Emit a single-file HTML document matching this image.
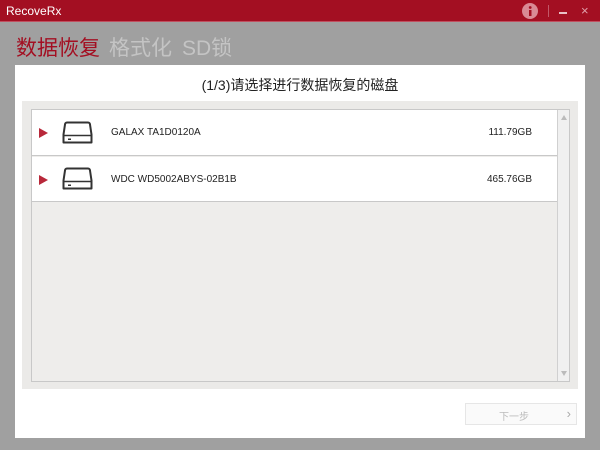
<!DOCTYPE html>
<html><head><meta charset="utf-8"><style>
*{margin:0;padding:0;box-sizing:border-box}
body{width:600px;height:450px;background:#a0a0a0;position:relative;overflow:hidden;font-family:"Liberation Sans","Noto Sans CJK SC",sans-serif}
.tb{position:absolute;left:0;top:0;width:600px;height:22px;background:#a30f22;border-bottom:1px solid #c05060}
.tb .t{position:absolute;left:6px;top:4px;color:#fff;font-size:12px}
.tabs{position:absolute;top:32px;font-size:21px;font-family:"Liberation Sans","Noto Sans CJK SC",sans-serif;white-space:nowrap}
.panel{position:absolute;left:15px;top:65px;width:570px;height:373px;background:#fff}
.h{position:absolute;left:0;width:570px;top:10px;text-align:center;font-size:14px;color:#222}
.area{position:absolute;left:7px;top:36px;width:556px;height:288px;background:#ebeae8}
.list{position:absolute;left:9px;top:8px;width:539px;height:273px;border:1px solid #c8c8c8;background:#eeedeb}
.row{position:absolute;left:0;width:526px;height:46px;background:#fff;border-bottom:1px solid #c8c8c8;font-size:10px;color:#222}
.row .a{position:absolute;left:7px;top:18px;width:0;height:0;border-left:9px solid #b8283a;border-top:5px solid transparent;border-bottom:5px solid transparent}
.row .n{position:absolute;left:79px;top:17px}
.row .s{position:absolute;right:26px;top:17px}
.sb{position:absolute;right:0;top:0;width:12px;height:271px;border-left:1px solid #d0d0d0;background:#f0f0f0}
.btn{position:absolute;left:450px;top:338px;width:112px;height:22px;border:1px solid #e6e6e6;background:#fafafa;font-size:10px;color:#bbb}
</style></head><body>
<div class="tb"><span class="t">RecoveRx</span>
<svg style="position:absolute;left:522px;top:3px" width="16" height="16"><circle cx="8" cy="8" r="8" fill="#d98a95"/><rect x="7" y="7" width="2.5" height="6" fill="#a30f22"/><circle cx="8.2" cy="4.5" r="1.4" fill="#a30f22"/></svg>
<div style="position:absolute;left:548px;top:5px;width:1px;height:12px;background:#c25868"></div>
<div style="position:absolute;left:559px;top:12px;width:8px;height:2px;background:#e9c0c6"></div>
<span style="position:absolute;left:581px;top:3px;color:#e0a0aa;font-size:13px">×</span>
</div>
<div class="tabs" style="left:16px;color:#a30f22">数据恢复</div>
<div class="tabs" style="left:109px;color:#c4c4c4">格式化</div>
<div class="tabs" style="left:182px;color:#c4c4c4">SD锁</div>
<div class="panel">
<div class="h">(1/3)请选择进行数据恢复的磁盘</div>
<div class="area"><div class="list">
<div class="row" style="top:0"><div class="a"></div>
<svg style="position:absolute;left:30px;top:11px" width="31" height="25"><path d="M5 1.5h21a2 2 0 0 1 2 2l1.5 10v8h-28v-8l1.5-10a2 2 0 0 1 2-2z" fill="#fff" stroke="#333" stroke-width="2" stroke-linejoin="round"/><path d="M2 14.5h27" stroke="#333" stroke-width="1.5"/><rect x="6" y="17.5" width="3" height="1.5" fill="#333"/></svg>
<span class="n">GALAX TA1D0120A</span><span class="s">111.79GB</span></div>
<div class="row" style="top:47px;height:45px"><div class="a"></div>
<svg style="position:absolute;left:30px;top:10px" width="31" height="25"><path d="M5 1.5h21a2 2 0 0 1 2 2l1.5 10v8h-28v-8l1.5-10a2 2 0 0 1 2-2z" fill="#fff" stroke="#333" stroke-width="2" stroke-linejoin="round"/><path d="M2 14.5h27" stroke="#333" stroke-width="1.5"/><rect x="6" y="17.5" width="3" height="1.5" fill="#333"/></svg>
<span class="n">WDC WD5002ABYS-02B1B</span><span class="s">465.76GB</span></div>
<div class="sb"><div style="position:absolute;left:3px;top:5px;border-bottom:5px solid #bbb;border-left:3px solid transparent;border-right:3px solid transparent"></div><div style="position:absolute;left:3px;bottom:5px;border-top:5px solid #bbb;border-left:3px solid transparent;border-right:3px solid transparent"></div></div>
</div></div>
<div class="btn"><span style="position:absolute;left:33px;top:4px">下一步</span><span style="position:absolute;right:5px;top:2px;font-size:13px;color:#aaa">›</span></div>
</div>
</body></html>
